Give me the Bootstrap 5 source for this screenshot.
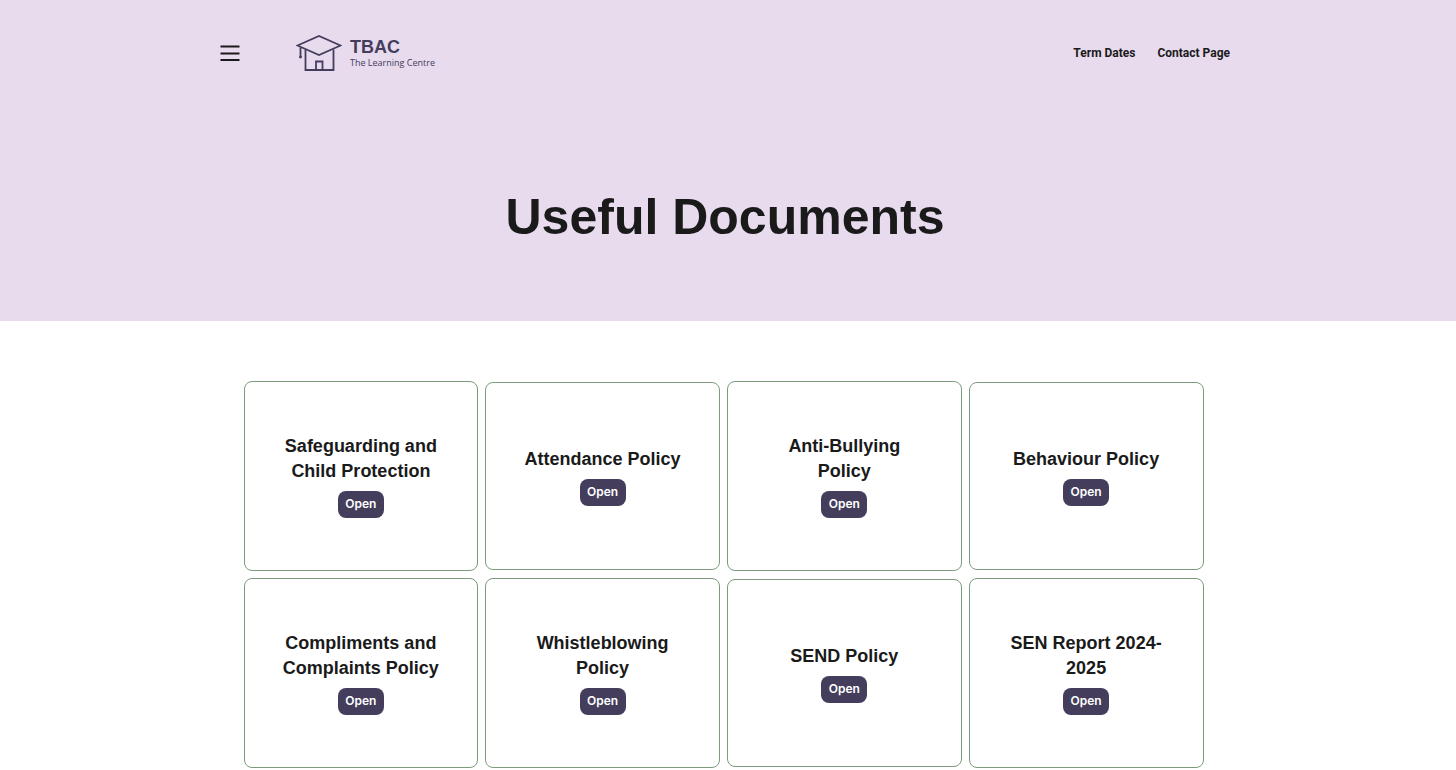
<!DOCTYPE html>
<html lang="en">
<head>
<meta charset="utf-8">
<meta name="viewport" content="width=device-width, initial-scale=1">
<title>Useful Documents - TBAC The Learning Centre</title>
<link rel="stylesheet" href="https://cdn.jsdelivr.net/npm/bootstrap@5.3.0/dist/css/bootstrap.min.css">
<style>
  body { color: #1a1a1a; font-family: Inter, "Liberation Sans", sans-serif; }
  .hero { background: #e8dbee; padding: 32px 6px 74px 0; }
  .site-bar { max-width: 1010px; min-height: 42px; }
  .menu-btn { line-height: 0; }
  .brand { color: #443d5c; gap: 8px; margin-left: 56px; }
  .brand-name { font: 700 18px/20px "Liberation Sans", sans-serif; }
  .brand-sub { font: 400 9px/12px "Open Sans", sans-serif; }
  .top-links { gap: 22px; }
  .top-links a { color: #1a1a1a; font: 700 12px/18px Roboto, "Liberation Sans", sans-serif; }
  .page-title { font: 700 50px/60px "Liberation Sans", sans-serif; margin-top: 113px; }
  .docs-wrap { padding: 60px 9px 0 0; }
  .docs { max-width: 960px; display: grid; grid-template-columns: repeat(4, 1fr); gap: 7px; align-items: center; }
  .doc { border: 1px solid #7b9b7c; border-radius: 8px; min-height: 188px; padding: 52px 32px; }
  .doc h2 { font: 700 18px/25px "Liberation Sans", sans-serif; margin-bottom: 7px; }
  .open-btn { background: #443d5c; color: #fff; border-radius: 8px; min-width: 46px; padding: 4px 7px 5px; font-size: 12px; line-height: 18px; font-weight: 600; }
</style>
</head>
<body>
<header class="hero">
  <nav class="site-bar mx-auto d-flex align-items-center">
    <button class="menu-btn btn p-0 border-0" type="button" aria-label="Menu">
      <svg width="20" height="20" viewBox="0 0 20 20" stroke="#1a1a1a" stroke-width="2"><path d="M.5 3.500H19.500M.5 10.500H19.500M.5 17H19.500"/></svg>
    </button>
    <a class="brand d-flex align-items-center text-decoration-none" href="#">
      <svg width="46" height="38" viewBox="0 0 46 38" fill="none" stroke="#443d5c" stroke-width="1.800"><path d="M1.500 11.500 23 2 44.500 11.500 23 21Z"/><path d="M9.500 15.500V36H37.500V15.500M20 36V27.500H26.500V36M4.500 13.500V23.500"/><circle cx="4.500" cy="23" r="1" fill="#443d5c" stroke-width="1"/></svg>
      <span class="d-flex flex-column"><span class="brand-name">TBAC</span><span class="brand-sub">The Learning Centre</span></span>
    </a>
    <div class="top-links d-flex ms-auto">
      <a class="text-decoration-none" href="#">Term Dates</a>
      <a class="text-decoration-none" href="#">Contact Page</a>
    </div>
  </nav>
  <h1 class="page-title text-center mb-0">Useful Documents</h1>
</header>
<main class="docs-wrap">
  <div class="docs mx-auto text-center">
    <section class="doc d-flex flex-column align-items-center justify-content-center"><h2>Safeguarding and Child Protection</h2><button class="open-btn btn border-0" type="button">Open</button></section>
    <section class="doc d-flex flex-column align-items-center justify-content-center"><h2>Attendance Policy</h2><button class="open-btn btn border-0" type="button">Open</button></section>
    <section class="doc d-flex flex-column align-items-center justify-content-center"><h2>Anti-Bullying<br>Policy</h2><button class="open-btn btn border-0" type="button">Open</button></section>
    <section class="doc d-flex flex-column align-items-center justify-content-center"><h2>Behaviour Policy</h2><button class="open-btn btn border-0" type="button">Open</button></section>
    <section class="doc d-flex flex-column align-items-center justify-content-center"><h2>Compliments and Complaints Policy</h2><button class="open-btn btn border-0" type="button">Open</button></section>
    <section class="doc d-flex flex-column align-items-center justify-content-center"><h2>Whistleblowing<br>Policy</h2><button class="open-btn btn border-0" type="button">Open</button></section>
    <section class="doc d-flex flex-column align-items-center justify-content-center"><h2>SEND Policy</h2><button class="open-btn btn border-0" type="button">Open</button></section>
    <section class="doc d-flex flex-column align-items-center justify-content-center"><h2>SEN Report 2024-<br>2025</h2><button class="open-btn btn border-0" type="button">Open</button></section>
  </div>
</main>
<script src="https://cdn.jsdelivr.net/npm/bootstrap@5.3.0/dist/js/bootstrap.bundle.min.js"></script>
</body>
</html>
